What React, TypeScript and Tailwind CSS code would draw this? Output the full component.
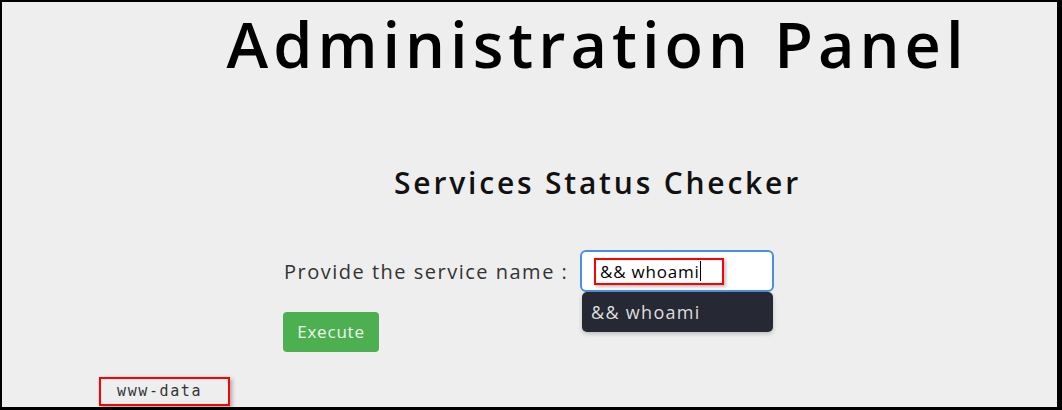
import React from "react";

export default function App() {
  return (
    <div className="w-[1062px] h-[410px] overflow-hidden bg-black">
      <div
        className="ml-[2px] mt-[2px] w-[1055px] h-[405px] bg-[#eeeeee] overflow-hidden relative"
        style={{ fontFamily: "'Open Sans', 'Noto Sans', sans-serif" }}
      >
        <div className="flex justify-center pl-[136px]">
          <h1 className="text-[63px] leading-[64px] font-semibold text-black mt-[10px] tracking-[5px] whitespace-nowrap">
            Administration Panel
          </h1>
        </div>
        <div className="flex justify-center pl-[136px] mt-[92px]">
          <h2 className="text-[30px] leading-[30px] font-semibold text-[#111] tracking-[2.8px] whitespace-nowrap">
            Services Status Checker
          </h2>
        </div>
        <div className="flex items-start pl-[282px] mt-[52px]">
          <span className="w-[296px] text-[20px] leading-[21px] text-[#333] mt-[11px] tracking-[1.5px] whitespace-nowrap">
            Provide the service name :
          </span>
          <div className="relative">
            <div className="w-[194px] h-[42px] bg-white border-2 border-[#4a90e2] rounded-[6px] flex items-center pl-[12px]">
              <div className="h-[27px] w-[130px] border-2 border-[#ff0000] flex items-center pl-[4px] shadow-[2px_2px_3px_rgba(0,0,0,0.25)]">
                <span className="text-[17px] text-black leading-none tracking-[0.8px]">&amp;&amp; whoami</span>
                <span className="w-[1px] h-[20px] bg-black" />
              </div>
            </div>
            <div className="absolute left-[2px] top-[42px] w-[191px] h-[40px] bg-[#262833] rounded-[5px] flex items-center pl-[9px] shadow-[0_2px_4px_rgba(0,0,0,0.2)]">
              <span className="text-[18px] text-[#dddddd] leading-none tracking-[1.3px]">&amp;&amp; whoami</span>
            </div>
          </div>
        </div>
        <div className="pl-[281px] mt-[20px]">
          <button className="w-[96px] h-[40px] bg-[#4caf50] rounded-[4px] text-[17px] text-[#eef7ee] tracking-[0.8px]">
            Execute
          </button>
        </div>
        <div className="pl-[97px] mt-[25px]">
          <div className="w-[131px] h-[29px] border-2 border-[#ff0000] flex items-center pl-[16px] shadow-[2px_2px_4px_rgba(0,0,0,0.3)]">
            <span
              className="text-[15px] text-[#333] leading-none tracking-[1.6px]"
              style={{ fontFamily: "'DejaVu Sans Mono', monospace" }}
            >
              www-data
            </span>
          </div>
        </div>
      </div>
    </div>
  );
}
